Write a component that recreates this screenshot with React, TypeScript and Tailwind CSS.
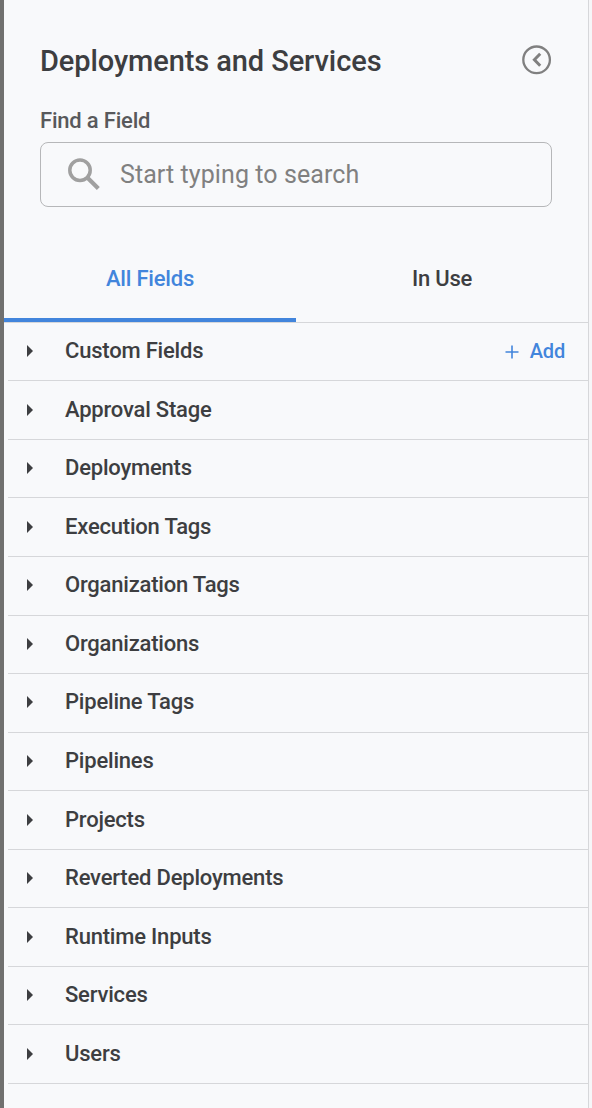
const rows = [
  { label: 'Custom Fields', size: 'h-[58px] pb-px', add: true },
  { label: 'Approval Stage', size: 'h-[59px]' },
  { label: 'Deployments', size: 'h-[58px] pb-px' },
  { label: 'Execution Tags', size: 'h-[59px]' },
  { label: 'Organization Tags', size: 'h-[59px] pb-[2px]' },
  { label: 'Organizations', size: 'h-[58px] pb-px' },
  { label: 'Pipeline Tags', size: 'h-[59px] pb-[2px]' },
  { label: 'Pipelines', size: 'h-[58px] pb-px' },
  { label: 'Projects', size: 'h-[59px]' },
  { label: 'Reverted Deployments', size: 'h-[58px] pb-px' },
  { label: 'Runtime Inputs', size: 'h-[59px]' },
  { label: 'Services', size: 'h-[58px] pb-px' },
  { label: 'Users', size: 'h-[59px]' },
];

export default function App() {
  return (
    <div className="flex h-[1108px] w-[592px] overflow-hidden bg-[#f8f9fb] font-['Roboto',sans-serif] font-medium text-[#3d3e41]">
      <div className="w-1 shrink-0 bg-[#70706f]" />
      <main className="w-[585px] shrink-0 border-r border-[#d6d7da]">
        <header className="flex h-[104px] items-start justify-between pt-[43px] pr-[36px] pl-9">
          <h1 className="text-[29px] leading-9 tracking-[-0.09px] whitespace-nowrap">Deployments and Services</h1>
          <button aria-label="Collapse panel" className="mt-[2px]">
            <svg className="block" width="30" height="30" viewBox="0 0 30 30" fill="none" stroke="#808080">
              <circle cx="14.6" cy="14.8" r="13.3" strokeWidth="2.3" />
              <path d="M18.2 8.8L12.4 14.8L18.2 20.8" strokeWidth="3" strokeLinejoin="miter" />
            </svg>
          </button>
        </header>
        <section className="h-[134px] px-9">
          <label htmlFor="field" className="block h-[38px] pt-[3px] text-[22px] leading-7 tracking-[-0.2px] text-[#58595c]">Find a Field</label>
          <div className="flex h-[65px] w-[512px] items-center rounded-lg border border-[#b6b7b9] pl-[27px]">
            <svg className="block shrink-0" width="34" height="34" viewBox="0 0 34 34" fill="none" stroke="#a0a0a0">
              <circle cx="12" cy="12.3" r="10.2" strokeWidth="3.5" />
              <path d="M19.5 19.8L30.3 30.6" strokeWidth="4.2" />
            </svg>
            <input id="field" placeholder="Start typing to search" className="ml-[18px] w-[400px] bg-transparent text-[25px] leading-8 font-normal tracking-[0.08px] outline-none placeholder:text-[#808080] placeholder:opacity-100" />
          </div>
        </section>
        <nav className="grid h-[85px] grid-cols-2 border-b border-[#d6d7da] text-[22px] leading-7 tracking-[-0.2px]">
          <button className="h-[84px] border-b-4 border-[#4285dc] pt-[2px] text-[#4285dc]">All Fields</button>
          <button className="h-[84px] border-b-4 border-transparent pt-[2px]">In Use</button>
        </nav>
        <div className="ml-1">
          {rows.map((row) => (
            <div key={row.label} className={`flex items-center border-b border-[#d6d7da] pr-[23px] pl-[19px] ${row.size}`}>
              <svg className="block shrink-0" width="6" height="12" viewBox="0 0 6 12" fill="#3d3e41">
                <path d="M0 0L6 6L0 12Z" />
              </svg>
              <span className="ml-8 text-[22px] leading-7 tracking-[-0.2px] whitespace-nowrap">{row.label}</span>
              {row.add && (
                <button className="ml-auto flex items-center text-[20px] leading-7 tracking-[-0.2px] text-[#4285dc]">
                  <svg className="mt-[2px] mr-[11px]" width="14" height="14" viewBox="0 0 14 14" fill="none" stroke="#4285dc" strokeWidth="1.6">
                    <path d="M7 .5V13.5M.5 7H13.5" />
                  </svg>
                  Add
                </button>
              )}
            </div>
          ))}
        </div>
      </main>
      <div className="flex-1 bg-[#f6f6f8]" />
    </div>
  );
}
